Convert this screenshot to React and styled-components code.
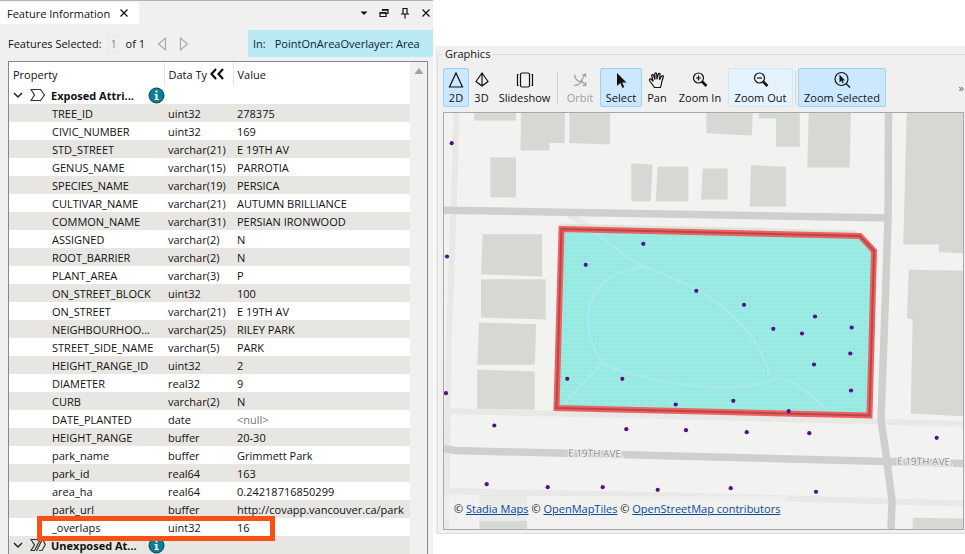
import React, { Component } from 'react'
import styled, { createGlobalStyle, css } from 'styled-components'

const attributes = [
    ['TREE_ID', 'uint32', '278375'],
    ['CIVIC_NUMBER', 'uint32', '169'],
    ['STD_STREET', 'varchar(21)', 'E 19TH AV'],
    ['GENUS_NAME', 'varchar(15)', 'PARROTIA'],
    ['SPECIES_NAME', 'varchar(19)', 'PERSICA'],
    ['CULTIVAR_NAME', 'varchar(21)', 'AUTUMN BRILLIANCE'],
    ['COMMON_NAME', 'varchar(31)', 'PERSIAN IRONWOOD'],
    ['ASSIGNED', 'varchar(2)', 'N'],
    ['ROOT_BARRIER', 'varchar(2)', 'N'],
    ['PLANT_AREA', 'varchar(3)', 'P'],
    ['ON_STREET_BLOCK', 'uint32', '100'],
    ['ON_STREET', 'varchar(21)', 'E 19TH AV'],
    ['NEIGHBOURHOO...', 'varchar(25)', 'RILEY PARK'],
    ['STREET_SIDE_NAME', 'varchar(5)', 'PARK'],
    ['HEIGHT_RANGE_ID', 'uint32', '2'],
    ['DIAMETER', 'real32', '9'],
    ['CURB', 'varchar(2)', 'N'],
    ['DATE_PLANTED', 'date', null],
    ['HEIGHT_RANGE', 'buffer', '20-30'],
    ['park_name', 'buffer', 'Grimmett Park'],
    ['park_id', 'real64', '163'],
    ['area_ha', 'real64', '0.24218716850299'],
    ['park_url', 'buffer', 'http://covapp.vancouver.ca/park'],
    ['_overlaps', 'uint32', '16'],
]

const buildings = [
    '474,113 516,113 516,121 474,121',
    '521,113 565,113 564.5,143.5 549.5,143.5 549.5,151 520.5,151',
    '569.5,113 610,113 610,145 569.5,143.5',
    '490.5,158 516,158 516,198 490.5,198',
    '631.3,163.7 652.7,165.3 650.7,201.7 631.3,201.7',
    '657.7,167.3 688.3,167.3 688.3,201.7 655.7,201.7',
    '702.7,169 727.7,169 727.7,200 701,200',
    '751,165.7 786,167.3 786,207.3 749.7,207.3',
    '706.5,113 752.7,113 752,136 706.5,133.7',
    '759,113 799.7,113 799.7,147.3 776,147.3 776,119 759,119',
    '808.7,113 850.7,113 849.7,168 807.3,168',
    '906.7,113 963,113 963,254 939,252.5 939,245 903.3,245',
    '908.7,270.3 963,271.3 963,416.7 910.7,414 912.7,320 907,318.7',
    '912.7,518.3 963,519 963,530 912.7,530',
    '482.7,234.7 542,234.7 542,277 481,274.7',
    '481,279.7 545.7,279.7 545.7,320 481,318',
    '479,323 536.3,324.7 534.7,365.3 477.3,365.3',
    '477.3,370 534.7,372 534.7,410 477.3,410',
    '479.5,496 527,496 527,530 479.5,530',
]

const trees = [
    [451.7, 143.7], [447, 257], [643.3, 244.3], [585.7, 265.3], [696.3, 291.3],
    [744, 305.3], [815, 317], [773.3, 329.3], [802, 334], [851.7, 328],
    [850.3, 354], [814, 365], [851, 391], [733.3, 401.3], [788.7, 411.7],
    [746.7, 432.7], [809.3, 433.7], [936.7, 438.3], [730.7, 488.7], [816, 492.3],
    [446, 393.7], [567.3, 379.3], [622.3, 379.3], [675.7, 405], [494.3, 426],
    [626.3, 429.7], [686, 430.7], [486.7, 484.7], [547.7, 487.7], [602.7, 487.7],
    [657.7, 490.3],
]

const park = '561.5,229.5 860,236.5 874,251.5 869.5,416 556.5,408.5'

const Icon = ({ size = 18, children }) => (
    <svg width={size} height={size} viewBox={`0 0 ${size} ${size}`} fill="none" stroke="currentColor" strokeWidth="1.2" aria-hidden="true">
        {children}
    </svg>
)

const tools = [
    { label: '2D', width: 26, checked: true, icon: <path d="M9 2L15.5 16H2.5Z" /> },
    { label: '3D', width: 25, icon: <path d="M9 2L3 10.5L9 15L15 10.5ZM9 2V15" /> },
    { label: 'Slideshow', width: 61, icon: <><rect x="4.5" y="2" width="9" height="14" rx="1.5" /><path d="M2.5 3.5H1.5V14.5H2.5M15.5 3.5H16.5V14.5H15.5" /></> },
    { separator: true },
    { label: 'Orbit', width: 40, disabled: true, icon: <><path d="M9.500 11L14 3.500M11.300 4.500L14.200 3L15 6" /><path d="M9.500 9L14.500 14M14.800 11V14.500H11.500" /><path d="M4 3.500C3 6 5 9.500 9.500 11.500M3 14C5 15 9 13.500 11.500 9.500" /></> },
    { label: 'Select', width: 42, checked: true, icon: <path d="M5 2V15L8.200 12L10.500 17L12.300 16L10.200 11.500H14.500Z" fill="#111" stroke="none" /> },
    { label: 'Pan', width: 30, icon: <path d="M6.500 16.500C5 14 3 12 1.500 9.500C1 8 2.500 7.500 3.500 8.500L5.200 10.300L3.700 5C3.500 3.500 5.200 3.200 5.600 4.500L7 8.500L6.800 3C6.800 1.500 8.600 1.500 8.700 3L9 8.300L10.300 3.200C10.700 1.900 12.300 2.300 12.100 3.600L11.500 8.700L13.700 5C14.500 4 15.800 4.800 15.300 6L13.700 11C13.500 13.500 13 15 12.300 16.500Z" /> },
    { label: 'Zoom In', width: 56, icon: <><circle cx="7.500" cy="7" r="5" /><path d="M5 7H10M7.500 4.500V9.500" /><path d="M11 10.500L15.500 15" strokeWidth="2.500" /></> },
    { label: 'Zoom Out', width: 65, hover: true, icon: <><circle cx="7.500" cy="7" r="5" /><path d="M5 7H10" /><path d="M11 10.500L15.500 15" strokeWidth="2.500" /></> },
    { separator: true },
    { label: 'Zoom Selected', width: 88, checked: true, icon: <><circle cx="8.500" cy="8" r="6.500" /><path d="M13 12.500L17 16.500" /><path d="M6.500 3.500V11.500L8.400 9.700L9.700 12.500L10.800 12L9.600 9.400H12Z" fill="#111" stroke="none" /></> },
]

const GroupRow = ({ title, many, shaded }) => (
    <Row $shaded={shaded}>
        <GroupCell colSpan="3">
            <GroupLabel>
                <ExpandButton aria-label={`Collapse ${title}`}>
                    <svg width="10" height="8" viewBox="0 0 10 8" fill="none" stroke="#222" strokeWidth="1.500"><path d="M1 2L5 6L9 2" /></svg>
                </ExpandButton>
                <svg width="16" height="14" viewBox="0 0 16 14" fill="none" stroke="#333" strokeWidth="1.200">
                    {many
                        ? <path d="M8 1.500H1L4.500 7L1 12.500H4.500L10.500 1M6.500 13L12.500 1L15.300 6.500L12 12.500H9" />
                        : <path d="M1 1.500H10.500L14.500 7L10.500 12.500H1L4.500 7Z" />}
                </svg>
                <GroupTitle>{title}</GroupTitle>
                <InfoBadge aria-label="Information">
                    <svg width="17" height="17" viewBox="0 0 17 17">
                        <circle cx="8.500" cy="8.500" r="7.500" fill="#05809a" stroke="#123d4a" />
                        <path d="M7.500 3.500H9.500V5.500H7.500ZM6.500 7H9.500V12H11V13H6.500V12H7.500V8H6.500Z" fill="#fff" />
                    </svg>
                </InfoBadge>
            </GroupLabel>
        </GroupCell>
    </Row>
)

const ParkMap = () => (
    <MapDrawing viewBox="444 113 519 417" preserveAspectRatio="xMidYMid slice" role="img" aria-label="Map">
        <defs>
            <pattern id="dots" width="4" height="4" patternUnits="userSpaceOnUse">
                <rect width="4" height="4" fill="#98ece3" />
                <rect x="1" y="1" width="1" height="1" fill="#8ecfca" />
            </pattern>
        </defs>
        <rect x="444" y="113" width="519" height="417" fill="#f2f2f0" />
        {buildings.map(points => <polygon key={points} points={points} fill="#d6d8d3" />)}
        <g fill="none" stroke="#e8e8e7" strokeWidth="6">
            <path d="M456.500 113L453.500 215L449 330L446 530" />
            <path d="M444 411.500L705 417.500L963 424.500" />
            <path d="M444 491.500L700 496.500L963 504" />
            <path d="M567 213L590 229" />
        </g>
        <g fill="none" stroke="#cfcfcf" strokeWidth="7.500">
            <path d="M444 210.700L891 218.500" />
            <path d="M888.500 113L888 220L884.500 325L881 420L886.500 458L892 502L891 530" />
            <path d="M444 449L455 451L705 457.300L963 464" />
        </g>
        <polygon points="559,224 854,231 861,236 561,230" fill="#dbe5da" />
        <polygon points={park} fill="url(#dots)" />
        <g fill="none" stroke="#a5eaee" strokeWidth="3">
            <path d="M596 233C612 246 630 262 647 268C670 278 690 285 705 295C730 311 760 337 770 376" />
            <path d="M647 268C615 267 588 289 588 318C588 340 594 352 603 363C620 375 680 387 720 388C745 388 765 384 775 379C795 378 808 395 829 411" />
            <path d="M603 363L565 403" />
        </g>
        <polygon points={park} fill="none" stroke="#f06060" strokeWidth="6" />
        <polygon points={park} fill="none" stroke="#b94747" strokeWidth="2" />
        {trees.map(([x, y]) => <circle key={`${x}-${y}`} cx={x} cy={y} r="2.100" fill="#570f86" />)}
        <StreetName x="568" y="457" transform="rotate(1 568 457)">E 19TH AVE.</StreetName>
        <StreetName x="897" y="465" transform="rotate(1 897 465)">E 19TH AVE.</StreetName>
    </MapDrawing>
)

export default class App extends Component {

    state = {
        feature: '1'
    }

    onFeatureChange = e => this.setState({ feature: e.target.value })

    render(){
        const { feature } = this.state

        return(
            <MainContainer>
                <GlobalStyle />
                <InformationPanel>
                    <TitleBar>
                        <Tab>
                            Feature Information
                            <BarButton aria-label="Close tab">
                                <Icon size={10}><path d="M1.500 1.500L8.500 8.500M8.500 1.500L1.500 8.500" /></Icon>
                            </BarButton>
                        </Tab>
                        <WindowButtons>
                            <BarButton aria-label="Menu">
                                <Icon size={10}><path d="M1.500 3.500H8.500L5 7Z" fill="currentColor" stroke="none" /></Icon>
                            </BarButton>
                            <BarButton aria-label="Float">
                                <Icon size={10}><path d="M3.500 3V1.500H9V5.500H7.500M3.500 2.200H9M1 4.500H7V8.500H1ZM1 5.200H7" /></Icon>
                            </BarButton>
                            <BarButton aria-label="Pin">
                                <Icon size={12}><path d="M4 7V1.500H8V7M2 7H10M6 7V11.500" /></Icon>
                            </BarButton>
                            <BarButton aria-label="Close">
                                <Icon size={10}><path d="M1.500 1.500L8.500 8.500M8.500 1.500L1.500 8.500" /></Icon>
                            </BarButton>
                        </WindowButtons>
                    </TitleBar>
                    <SelectionBar>
                        <label htmlFor="feature">Features Selected:</label>
                        <FeatureInput id="feature" value={feature} onChange={this.onFeatureChange} />
                        <span>of 1</span>
                        <StepButton aria-label="Previous feature">
                            <Icon size={14}><path d="M10.500 1V13L3.500 7Z" /></Icon>
                        </StepButton>
                        <StepButton aria-label="Next feature">
                            <Icon size={14}><path d="M3.500 1V13L10.500 7Z" /></Icon>
                        </StepButton>
                        <Source>
                            <span>In:</span>
                            <span>PointOnAreaOverlayer: Area</span>
                        </Source>
                    </SelectionBar>
                    <ListBox>
                        <Table>
                            <colgroup>
                                <NameColumn />
                                <TypeColumn />
                                <col />
                            </colgroup>
                            <thead>
                                <tr>
                                    <HeadCell>Property</HeadCell>
                                    <HeadCell>
                                        <TypeHead>
                                            Data Ty
                                            <svg width="16" height="12" viewBox="0 0 16 12" fill="none" stroke="#111" strokeWidth="2.200"><path d="M7 1L2.500 6L7 11M14 1L9.500 6L14 11" /></svg>
                                        </TypeHead>
                                    </HeadCell>
                                    <HeadCell>Value</HeadCell>
                                </tr>
                            </thead>
                            <tbody>
                                <GroupRow title="Exposed Attri..." />
                                {attributes.map(([name, type, value], i) =>
                                    <Row key={name} $shaded={i % 2 === 0}>
                                        <NameCell>
                                            {name}
                                            {name === '_overlaps' && <Callout />}
                                        </NameCell>
                                        <Cell>{type}</Cell>
                                        <Cell $empty={value === null}>{value === null ? '<null>' : value}</Cell>
                                    </Row>
                                )}
                                <GroupRow title="Unexposed At..." many shaded />
                            </tbody>
                        </Table>
                        <ScrollTrack>
                            <svg width="10" height="6" viewBox="0 0 10 6"><path d="M5 0L9.500 6H0.500Z" fill="#a0a0a0" /></svg>
                        </ScrollTrack>
                    </ListBox>
                </InformationPanel>
                <GraphicsPanel>
                    <GroupBox>
                        <Legend>Graphics</Legend>
                        <Toolbar>
                            {tools.map((tool, i) => tool.separator
                                ? <Separator key={i} />
                                : <ToolButton key={i} $width={tool.width} $checked={tool.checked} $hover={tool.hover} disabled={tool.disabled}>
                                    <Icon>{tool.icon}</Icon>
                                    {tool.label}
                                </ToolButton>
                            )}
                            <MoreButton aria-label="More tools">»</MoreButton>
                        </Toolbar>
                        <MapFrame>
                            <ParkMap />
                            <Attribution>
                                © <a href="#stadia">Stadia Maps</a> © <a href="#openmaptiles">OpenMapTiles</a> © <a href="#osm">OpenStreetMap contributors</a>
                            </Attribution>
                        </MapFrame>
                    </GroupBox>
                </GraphicsPanel>
            </MainContainer>
        )
    }
}

const GlobalStyle = createGlobalStyle`
    * {
        box-sizing: border-box;
    }
    body {
        margin: 0;
        background-color: white;
    }
    body, button, input {
        font-family: "Open Sans", "Noto Sans", sans-serif;
        font-size: 11px;
        color: #111;
    }
    button {
        padding: 0;
        border: 0;
        background: none;
    }
    svg {
        display: block;
        flex-shrink: 0;
    }
`

const MainContainer = styled.div`
    display: grid;
    grid-template-columns: 433fr 530fr;
    column-gap: 2px;
    min-height: 100vh;
`

const InformationPanel = styled.section`
    display: flex;
    flex-direction: column;
    min-width: 0;
    background-color: #f0f0f0;
    border-top: 1px solid #b4b4b4;
`

const TitleBar = styled.div`
    display: flex;
    justify-content: space-between;
    height: 23px;
    padding-top: 1px;
`

const Tab = styled.div`
    display: flex;
    align-items: center;
    gap: 9px;
    padding: 0 10px 0 7px;
    background-color: white;
`

const WindowButtons = styled.div`
    display: flex;
    align-items: center;
    gap: 10px;
    padding-right: 2px;
`

const BarButton = styled.button`
    color: #111;
`

const SelectionBar = styled.div`
    display: flex;
    align-items: center;
    height: 37px;
    padding: 2px 0 0 8px;
`

const FeatureInput = styled.input`
    width: 11px;
    height: 18px;
    margin: 0 7px 0 6px;
    padding: 0 2px;
    border: 1px solid #e9e9e9;
    background: none;
    color: #888;
`

const StepButton = styled.button`
    margin-left: 8px;
    color: #aaa;

    span + & {
        margin-left: 10px;
    }
`

const Source = styled.div`
    display: flex;
    align-items: center;
    gap: 9px;
    width: 185px;
    height: 27px;
    margin-left: auto;
    padding-left: 5px;
    background-color: #b9e9f3;
    color: #123;
    white-space: nowrap;
`

const ListBox = styled.div`
    display: flex;
    flex: 1;
    margin: 0 5px 0 8px;
    border: 1px solid #828790;
    border-bottom: 0;
    background-color: white;
`

const Table = styled.table`
    flex: 1;
    align-self: flex-start;
    min-width: 0;
    table-layout: fixed;
    border-collapse: collapse;
`

const NameColumn = styled.col`
    width: 155px;
`

const TypeColumn = styled.col`
    width: 69px;
`

const HeadCell = styled.th`
    height: 24px;
    padding: 0 0 0 4px;
    border-right: 1px solid #e5e5e5;
    font-weight: 400;
    text-align: left;

    &:last-child {
        border-right: 0;
    }
`

const TypeHead = styled.div`
    display: flex;
    align-items: center;
    gap: 2px;
    white-space: nowrap;
`

const Row = styled.tr`
    height: 18px;
    background-color: ${props => props.$shaded ? "#e7e6e2" : "white"};
`

const Cell = styled.td`
    padding: 1px 0 0 4px;
    overflow: hidden;
    line-height: 17px;
    white-space: nowrap;
    color: ${props => props.$empty ? "#777" : "#111"};
`

const NameCell = styled(Cell)`
    position: relative;
    padding-left: 43px;
    overflow: visible;
`

const Callout = styled.div`
    position: absolute;
    top: -2px;
    left: 28px;
    width: 238px;
    height: 25px;
    border: 5px solid #f95014;
    pointer-events: none;
`

const GroupCell = styled.td`
    padding: 0;
`

const GroupLabel = styled.div`
    display: flex;
    align-items: center;
    height: 18px;
    padding-left: 4px;
`

const ExpandButton = styled.button`
    margin-right: 7px;
`

const GroupTitle = styled.span`
    width: 97px;
    margin-left: 5px;
    font-weight: 700;
    white-space: nowrap;
`

const InfoBadge = styled.button`
    flex-shrink: 0;
`

const ScrollTrack = styled.div`
    display: flex;
    justify-content: center;
    flex: 0 0 17px;
    padding-top: 6px;
    background-color: #f0f0f0;
`

const GraphicsPanel = styled.section`
    display: flex;
    min-width: 0;
    margin: 46px 0 20px;
    padding: 0 0 0 2px;
    background-color: #f0f0f0;
`

const GroupBox = styled.fieldset`
    display: flex;
    flex-direction: column;
    flex: 1;
    min-width: 0;
    margin: 0;
    padding: 6px 1px 3px 5px;
    border: 1px solid #dcdcdc;
    border-right: 0;
`

const Legend = styled.legend`
    padding: 0 2px;
    line-height: 16px;
`

const Toolbar = styled.div`
    display: flex;
    align-items: center;
    margin-bottom: 5px;
`

const ToolButton = styled.button`
    display: flex;
    flex-direction: column;
    align-items: center;
    flex: 0 0 ${props => props.$width}px;
    height: 39px;
    padding-top: 2px;
    border: 1px solid transparent;
    border-radius: 2px;
    line-height: 18px;
    white-space: nowrap;

    ${props => props.$checked && css`
        border-color: #99d1ff;
        background-color: #cce8ff;
    `}
    ${props => props.$hover && css`
        border-color: #cce8ff;
        background-color: #e5f3ff;
    `}
    &:disabled {
        color: #a0a0a0;
    }
`

const Separator = styled.div`
    flex: 0 0 1px;
    height: 34px;
    margin: 0 2px;
    background-color: #d5d5d5;
`

const MoreButton = styled.button`
    margin-left: auto;
    color: #666;
`

const MapFrame = styled.div`
    position: relative;
    flex: 1;
    border: 1px solid #a4a9b0;
    overflow: hidden;
`

const MapDrawing = styled.svg`
    position: absolute;
    width: 100%;
    height: 100%;
`

const StreetName = styled.text`
    font-family: "Open Sans", sans-serif;
    font-size: 10px;
    fill: #8c8c8c;
    stroke: #f2f2f0;
    stroke-width: 2px;
    paint-order: stroke;
`

const Attribution = styled.div`
    position: absolute;
    bottom: 8px;
    left: 0;
    padding: 0 7px 0 10px;
    background-color: rgba(240, 240, 240, 0.75);
    line-height: 25px;
    white-space: nowrap;

    a {
        color: #0b4a9c;
    }
`
